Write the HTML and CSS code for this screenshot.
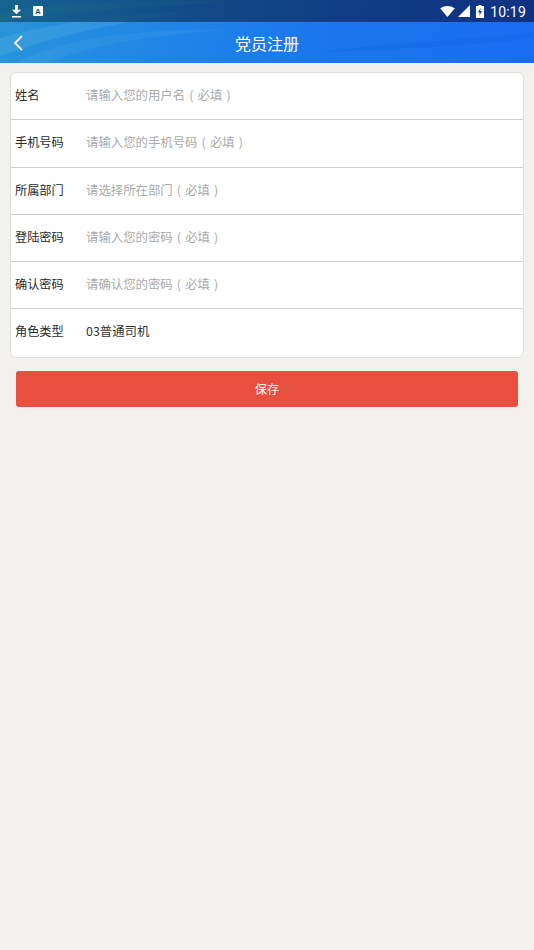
FILE: index.html
```html
<!DOCTYPE html>
<html lang="zh-CN">
<head>
<meta charset="utf-8">
<title>党员注册</title>
<link rel="stylesheet" href="styles.css">
</head>
<body>
<header class="top">
  <svg class="waves" viewBox="0 0 534 63" preserveAspectRatio="none" aria-hidden="true">
    <path d="M0 38C50 24 110 14 190 12C130 20 60 34 0 56Z" fill="#8fd4f0" opacity=".14"/>
    <path d="M20 60C70 38 140 28 230 30C160 34 90 44 50 63H20Z" fill="#8fd4f0" opacity=".09"/>
    <path d="M0 14C60 2 130 -2 240 2C160 6 70 10 0 22Z" fill="#3fc0b0" opacity=".25"/>
    <path d="M320 52C380 44 460 40 534 32V38C470 46 390 50 320 52Z" fill="#0f58d8" opacity=".2"/>
  </svg>
  <div class="status">
    <svg class="ico-dl" viewBox="0 0 12 14"><path d="M4.5 0H7.500V5H11L6 10L1 5H4.500ZM1 12H11V13.500H1Z" fill="#fff"/></svg>
    <span class="ico-a"><span>A</span></span>
    <span class="grow"></span>
    <svg class="ico-wifi" viewBox="0 0 16 12"><path d="M0 2.500Q8 -2.500 16 2.500L8 12Z" fill="#fff"/></svg>
    <svg class="ico-sig" viewBox="0 0 12 12"><path d="M12 0V12H0Z" fill="#fff"/></svg>
    <svg class="ico-bat" viewBox="0 0 8 13"><path d="M2.500 0H5.500V1H8V13H0V1H2.500Z" fill="#fff"/><path d="M4.800 2.500L2 7.500H3.800L3.200 11L6 6H4.200Z" fill="#1a4a8c"/></svg>
    <span class="clock">10:19</span>
  </div>
  <nav class="nav">
    <svg class="back" viewBox="0 0 12 18"><path d="M10 2L3 9L10 16" fill="none" stroke="#fff" stroke-width="1.800"/></svg>
    <h1 class="title">党员注册</h1>
  </nav>
</header>
<main class="main">
  <section class="card">
    <div class="row"><span class="label">姓名</span><span class="hint">请输入您的用户名<span class="paren">(</span>必填<span class="paren">)</span></span></div>
    <div class="row"><span class="label">手机号码</span><span class="hint">请输入您的手机号码<span class="paren">(</span>必填<span class="paren">)</span></span></div>
    <div class="row"><span class="label">所属部门</span><span class="hint">请选择所在部门<span class="paren">(</span>必填<span class="paren">)</span></span></div>
    <div class="row"><span class="label">登陆密码</span><span class="hint">请输入您的密码<span class="paren">(</span>必填<span class="paren">)</span></span></div>
    <div class="row"><span class="label">确认密码</span><span class="hint">请确认您的密码<span class="paren">(</span>必填<span class="paren">)</span></span></div>
    <div class="row row-last"><span class="label">角色类型</span><span class="value">03普通司机</span></div>
  </section>
  <button class="save" type="button">保存</button>
</main>
</body>
</html>
```
FILE: styles.css
```css
* { box-sizing: border-box; }
html, body { margin: 0; height: 100%; }
body {
  background: #f2f1ed;
  font-family: "Noto Sans CJK SC", "Noto Sans", sans-serif;
  color: #222;
}
.top {
  position: relative;
  height: 63px;
  overflow: hidden;
  background: linear-gradient(100deg, #2a94d8 0%, #1f86e6 30%, #1c76ee 60%, #1a6cf0 100%);
}
.waves { position: absolute; inset: 0; width: 100%; height: 100%; }
.status {
  position: relative;
  height: 22px;
  display: flex;
  align-items: center;
  padding: 0 8px 0 11px;
  background: linear-gradient(90deg, rgba(10,70,100,.62), rgba(12,50,100,.74) 45%, rgba(14,36,105,.82));
}
.grow { flex: 1; }
.ico-dl { width: 11px; height: 13px; }
.ico-a {
  margin-left: 11px;
  width: 10px;
  height: 10px;
  background: #fff;
  border-radius: 1px;
  display: flex;
  align-items: center;
  justify-content: center;
  font: bold 8px "Liberation Sans", sans-serif;
  color: #1c5a8c;
}
.ico-wifi { width: 15px; height: 11px; }
.ico-sig { width: 12px; height: 12px; margin-left: 3px; }
.ico-bat { width: 8px; height: 13px; margin-left: 6px; }
.clock {
  margin-left: 6px;
  padding-top: 2px;
  font: 14px/20px Roboto, sans-serif;
  color: #fff;
  letter-spacing: .2px;
}
.nav {
  position: relative;
  height: 41px;
  display: flex;
  align-items: center;
  justify-content: center;
}
.back { position: absolute; left: 12px; top: 12px; width: 12px; height: 18px; }
.title { margin: 0; font-size: 16px; font-weight: 400; color: #fff; line-height: 40px; }
.main { padding: 9px 10px 0; }
.card {
  background: #fff;
  border: 1px solid #dfdfdc;
  border-radius: 6px;
  height: 286px;
  display: flex;
  flex-direction: column;
}
.row {
  height: 47.300px;
  display: flex;
  align-items: center;
  padding: 0 0 2px 4px;
  font-size: 12.200px;
  border-bottom: 1px solid #cfcfcf;
}
.row-last { flex: 1; border-bottom: 0; padding-bottom: 4px; }
.label { width: 71px; color: #2a2a2a; }
.hint { color: #aaa; font-size: 12.400px; }
.paren { display: inline-block; width: 1em; text-align: center; }
.value { color: #333; font-size: 12.400px; }
.save {
  display: block;
  margin: 13px 6px 0;
  width: 502px;
  height: 36px;
  border: 0;
  border-radius: 3px;
  background: #e84f3e;
  color: #fff;
  font: 12.200px "Noto Sans CJK SC", sans-serif;
}
```
